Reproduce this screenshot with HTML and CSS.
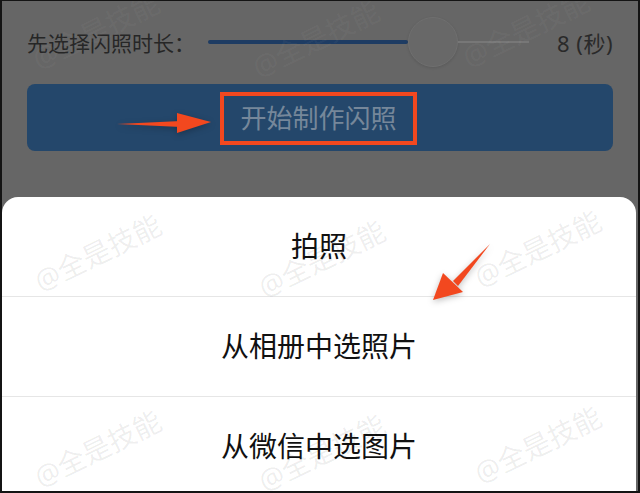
FILE: index.html
```html
<!DOCTYPE html>
<html lang="zh-CN">
<head>
    <meta charset="UTF-8">
    <title>闪照—选择图片</title>
    <link rel="stylesheet" href="styles.css">
</head>
<body>
<div class="frame">
    <div class="top">
        <div class="duration">
            <span class="label">先选择闪照时长：</span>
            <div class="slider">
                <i class="fill"></i>
                <i class="thumb"></i>
                <i class="rest"></i>
            </div>
            <span class="value">8 (秒)</span>
        </div>
        <a href="javascript:;" class="startBtn"><span class="mark">开始制作闪照</span></a>
    </div>

    <ul class="sheet">
        <li>拍照</li>
        <li>从相册中选照片</li>
        <li>从微信中选图片</li>
    </ul>

    <!-- 标注箭头 -->
    <svg class="arrow arrow1" width="100" height="24" viewBox="0 0 100 24">
        <path d="M2 13 L66 10 L66 16 Z" fill="#f2481f"/>
        <path d="M62 2 L96 11 L62 22 Z" fill="#f2481f"/>
    </svg>
    <svg class="arrow arrow2" width="70" height="66" viewBox="0 0 70 66">
        <path d="M62 4 L25 41 L30 46 Z" fill="#f2481f"/>
        <path d="M15 33 L5 60 L35 52 Z" fill="#f2481f"/>
    </svg>

    <!-- 水印 -->
    <span class="wm dark" style="left:38px;top:44px">@全是技能</span>
    <span class="wm dark" style="left:258px;top:52px">@全是技能</span>
    <span class="wm dark" style="left:468px;top:42px">@全是技能</span>
    <span class="wm" style="left:40px;top:266px">@全是技能</span>
    <span class="wm" style="left:264px;top:272px">@全是技能</span>
    <span class="wm" style="left:480px;top:262px">@全是技能</span>
    <span class="wm" style="left:40px;top:462px">@全是技能</span>
    <span class="wm" style="left:264px;top:466px">@全是技能</span>
    <span class="wm" style="left:480px;top:458px">@全是技能</span>
</div>
</body>
</html>
```

FILE: styles.css
```css
*{margin:0;padding:0}
ul{list-style:none}
a{text-decoration:none}
body{background:#111;font-family:"Noto Sans","Noto Sans CJK SC",sans-serif}
.frame{width:640px;height:493px;box-sizing:border-box;border:2px solid #141414;border-top-width:1px;background:#666;position:relative;overflow:hidden}

.top{height:196px;padding:17px 25px 0;box-sizing:border-box}
.duration{height:48px;display:flex;align-items:center}
.label{font-size:21px;color:#262626;margin-right:13px}
.slider{flex:1;display:flex;align-items:center;height:48px}
.slider .fill{width:200px;height:4px;background:#1e3c63;border-radius:2px}
.slider .thumb{width:50px;height:50px;border-radius:50%;box-sizing:border-box;border:1px solid #6f6f6f;background:#686868;box-shadow:0 1px 3px rgba(0,0,0,0.12)}
.slider .rest{flex:1;height:2px;background:#777}
.value{font-size:22px;color:#2a2a2a;margin-left:28px;letter-spacing:0.5px}

.startBtn{display:flex;justify-content:center;align-items:center;height:67px;margin-top:18px;border-radius:8px;background:#24476b}
.mark{font-size:26px;line-height:45px;color:#76879a;padding:0 16px;border:4px solid #f2481f;margin-left:-3px;margin-top:2px}

.sheet{background:#fff;border-radius:16px 16px 0 0;margin-right:2px}
.sheet li{height:99px;line-height:99px;text-align:center;font-size:28px;color:#111;border-bottom:1px solid #e6e6e6}
.sheet li:last-child{border-bottom:none}

.arrow{position:absolute;filter:drop-shadow(0 2px 3px rgba(0,0,0,0.25))}
.arrow1{left:113px;top:110px}
.arrow2{left:426px;top:239px}

.wm{position:absolute;font-size:28px;line-height:1;color:rgba(0,0,0,0.075);transform:rotate(-26deg);transform-origin:left bottom;white-space:nowrap;pointer-events:none}
.wm.dark{color:rgba(255,255,255,0.05)}
```
